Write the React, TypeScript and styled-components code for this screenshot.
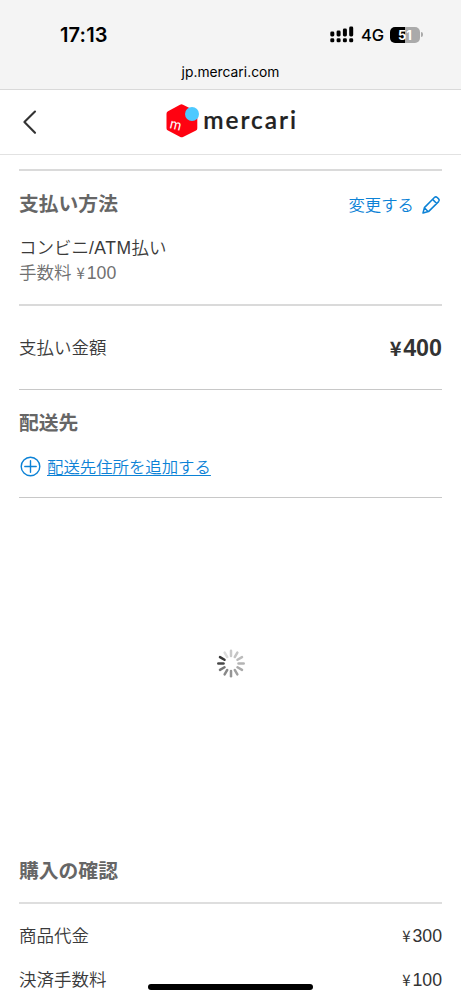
import React from 'react';
import styled, { createGlobalStyle } from 'styled-components';

const GlobalStyle = createGlobalStyle`
  * { box-sizing: border-box; }
  body {
    margin: 0;
    background: #fff;
    color: #333;
    font-family: "Liberation Sans", "Noto Sans CJK JP", sans-serif;
    -webkit-font-smoothing: antialiased;
  }
`;

const Screen = styled.div`
  position: relative;
  width: 461px;
  height: 999px;
  overflow: hidden;
  background: #fff;
`;

const BrowserChrome = styled.div`
  height: 90px;
  background: #f4f4f4;
  border-bottom: 1px solid #d9d9d9;
  color: #000;
  font-family: Inter, sans-serif;
`;

const StatusBar = styled.div`
  height: 60px;
  padding: 9px 38px 0 60px;
  display: flex;
  align-items: center;
  justify-content: space-between;
`;

const Clock = styled.span`
  font-size: 20px;
  font-weight: 600;
  letter-spacing: 0.15px;
`;

const StatusIcons = styled.div`
  display: flex;
  align-items: center;
`;

const Network = styled.span`
  width: 29px;
  margin-left: 7px;
  font-size: 16.5px;
  font-weight: 450;
  letter-spacing: -0.2px;
`;

const Battery = styled.div`
  width: 30px;
  height: 16px;
  margin-right: 2.5px;
  border-radius: 5px;
  background: linear-gradient(90deg, #000 51%, #aaa 51%);
  color: #fff;
  font-size: 13px;
  font-weight: 700;
  line-height: 16px;
  text-align: center;
`;

const BatteryTip = styled.div`
  width: 2px;
  height: 5px;
  margin-left: -1.5px;
  border-radius: 0 2px 2px 0;
  background: #aaa;
`;

const Address = styled.div`
  text-align: center;
  font-size: 13.8px;
  line-height: 24px;
  letter-spacing: 0.02px;
`;

const Header = styled.header`
  display: flex;
  height: 65px;
  padding-left: 18px;
  align-items: center;
  border-bottom: 1px solid #e2e2e2;
`;

const BackButton = styled.button`
  display: flex;
  width: 24px;
  height: 30px;
  padding: 0;
  border: 0;
  background: none;
`;

const Logo = styled.svg`
  width: 136px;
  height: 40px;
  margin-left: 122px;
`;

const Content = styled.main`
  padding-top: 14px;
`;

const Section = styled.section<{ $height: number; $rule: string }>`
  height: ${p => p.$height}px;
  margin: 0 19px;
  border-top: ${p => p.$rule};
`;

const Row = styled.div<{ $height: number }>`
  display: flex;
  height: ${p => p.$height}px;
  align-items: center;
  justify-content: space-between;
`;

const Title = styled.h2`
  margin: 0;
  color: #666;
  font-size: 19.8px;
  font-weight: 700;
  line-height: 30px;
`;

const Label = styled.div<{ $muted?: boolean }>`
  color: ${p => (p.$muted ? '#707070' : '#3a3a3a')};
  font-size: 17.5px;
  font-weight: 350;
  line-height: 25px;
  white-space: nowrap;
`;

const Latin = styled.span`
  letter-spacing: 0.5px;
`;

const Amount = styled.span<{ $large?: boolean }>`
  display: inline-flex;
  align-items: baseline;
  font-size: ${p => (p.$large ? 23.3 : 17.7)}px;
  font-weight: ${p => (p.$large ? 700 : 400)};
`;

const Yen = styled.span<{ $large?: boolean }>`
  margin-right: ${p => (p.$large ? 1.5 : 2)}px;
  font-family: "Noto Sans CJK JP", sans-serif;
  font-size: ${p => (p.$large ? 20 : 15)}px;
  line-height: 1;
`;

const Action = styled.a<{ $trailing?: boolean }>`
  display: flex;
  padding-top: ${p => (p.$trailing ? 3 : 0)}px;
  align-items: center;
  color: #0c82d6;
  font-size: 16.4px;
  font-weight: 350;
  line-height: 24px;
`;

const Underlined = styled.span`
  margin-left: 5px;
  text-decoration: underline;
  text-decoration-thickness: 1px;
  text-underline-offset: 2px;
`;

const PencilIcon = styled.svg`
  width: 20px;
  height: 20px;
  margin: 0 1px 0 7px;
`;

const LoadingArea = styled.div`
  display: flex;
  height: 332px;
  margin: 0 19px;
  align-items: center;
  justify-content: center;
  border-top: 1px solid #c8c8c8;
`;

const Summary = styled.section`
  margin: 6px 19px 0;
`;

const SummaryHeading = styled.div`
  height: 67px;
  padding-top: 21px;
`;

const SummaryRows = styled.div`
  padding-top: 10px;
  border-top: 2px solid #dedede;
`;

const HomeIndicator = styled.div`
  position: absolute;
  left: 148px;
  bottom: 9px;
  width: 165px;
  height: 6px;
  border-radius: 3px;
  background: #000;
`;

const spokes = ['#c9c9c9', '#c4c4c4', '#bcbcbc', '#b4b4b4', '#aaa', '#a0a0a0', '#959595', '#888', '#777', '#484848', '#383838', '#dcdcdc'];

function Price({ value, large }: { value: string; large?: boolean }) {
  return (
    <Amount $large={large}>
      <Yen $large={large}>¥</Yen>
      {value}
    </Amount>
  );
}

export default function App() {
  return (
    <>
      <GlobalStyle />
      <Screen>
        <BrowserChrome>
          <StatusBar>
            <Clock>17:13</Clock>
            <StatusIcons>
              <svg width="24" height="17" viewBox="0 0 24 17">
                {[5, 6, 8, 10].map((h, i) => (
                  <g key={i}>
                    <rect x={0.3 + i * 6.3} y={10.5 - h} width="4" height={h} rx="1.4" />
                    <rect x={0.3 + i * 6.3} y="12.3" width="4" height="4" rx="1.4" />
                  </g>
                ))}
              </svg>
              <Network>4G</Network>
              <Battery>51</Battery>
              <BatteryTip />
            </StatusIcons>
          </StatusBar>
          <Address>jp.mercari.com</Address>
        </BrowserChrome>

        <Header>
          <BackButton aria-label="戻る">
            <svg width="24" height="30" viewBox="0 0 24 30" fill="none" stroke="#333" strokeWidth="2.1" strokeLinecap="round" strokeLinejoin="round">
              <path d="M17 4.5 6.4 15 17 25.8" />
            </svg>
          </BackButton>
          <Logo viewBox="0 0 136 40">
            <path d="M16 2.7Q17.5 1.9 19 2.7L32 9.3Q33.3 10.1 33.3 11.8V26.3Q33.3 27.9 32 28.6L19 35Q17.7 35.7 16.3 35L4 28.6Q2.5 27.9 2.5 26.3V11.8Q2.5 10.1 4 9.3Z" fill="#ff0211" />
            <circle cx="28" cy="12" r="7" fill="#4dc9ff" />
            <text x="5" y="26" fill="#fff" fontFamily="Lato, sans-serif" fontSize="15" transform="rotate(14 5 26)" textLength="11.5" lengthAdjust="spacingAndGlyphs">m</text>
            <text x="39.2" y="27.3" fill="#222" stroke="#222" strokeWidth=".2" fontFamily="Lato, sans-serif" fontSize="24.5" fontWeight="600" letterSpacing="2" textLength="95" lengthAdjust="spacingAndGlyphs">mercari</text>
          </Logo>
        </Header>

        <Content>
          <Section $height={135} $rule="2px solid #dadada">
            <Row $height={65}>
              <Title>支払い方法</Title>
              <Action $trailing>
                変更する
                <PencilIcon viewBox="0 0 20 20" fill="none" stroke="#0c82d6" strokeWidth="1.5" strokeLinejoin="round">
                  <path d="M2 18 3.4 12.6 13.4 2.5Q14.8 1.2 16.2 2.5L17.6 3.9Q18.9 5.2 17.6 6.6L7.5 16.6ZM11.6 4.4 15.7 8.5M3.4 12.8 7.3 16.7" />
                </PencilIcon>
              </Action>
            </Row>
            <Label>コンビニ<Latin>/ATM</Latin>払い</Label>
            <Label $muted>手数料 <Price value="100" /></Label>
          </Section>
          <Section $height={85} $rule="2px solid #dadada">
            <Row $height={84}>
              <Label>支払い金額</Label>
              <Price large value="400" />
            </Row>
          </Section>
          <Section $height={108} $rule="1px solid #c8c8c8">
            <Row $height={65}>
              <Title>配送先</Title>
            </Row>
            <Action>
              <svg width="23" height="24" viewBox="0 0 23 24" fill="none" stroke="#0c82d6" strokeWidth="1.4" strokeLinecap="round">
                <circle cx="11.5" cy="11.5" r="9.3" />
                <path d="M11.5 5.8V17.2M5.8 11.5H17.2" />
              </svg>
              <Underlined>配送先住所を追加する</Underlined>
            </Action>
          </Section>
        </Content>

        <LoadingArea>
          <svg width="30" height="30" viewBox="-15 -14.5 30 30" strokeWidth="2.5" strokeLinecap="round">
            {spokes.map((color, i) => (
              <line key={color} y1="-7.5" y2="-12.7" stroke={color} transform={`rotate(${i * 30})`} />
            ))}
          </svg>
        </LoadingArea>

        <Summary>
          <SummaryHeading>
            <Title>購入の確認</Title>
          </SummaryHeading>
          <SummaryRows>
            <Row $height={44.5}>
              <Label>商品代金</Label>
              <Price value="300" />
            </Row>
            <Row $height={44.5}>
              <Label>決済手数料</Label>
              <Price value="100" />
            </Row>
          </SummaryRows>
        </Summary>
        <HomeIndicator />
      </Screen>
    </>
  );
}
